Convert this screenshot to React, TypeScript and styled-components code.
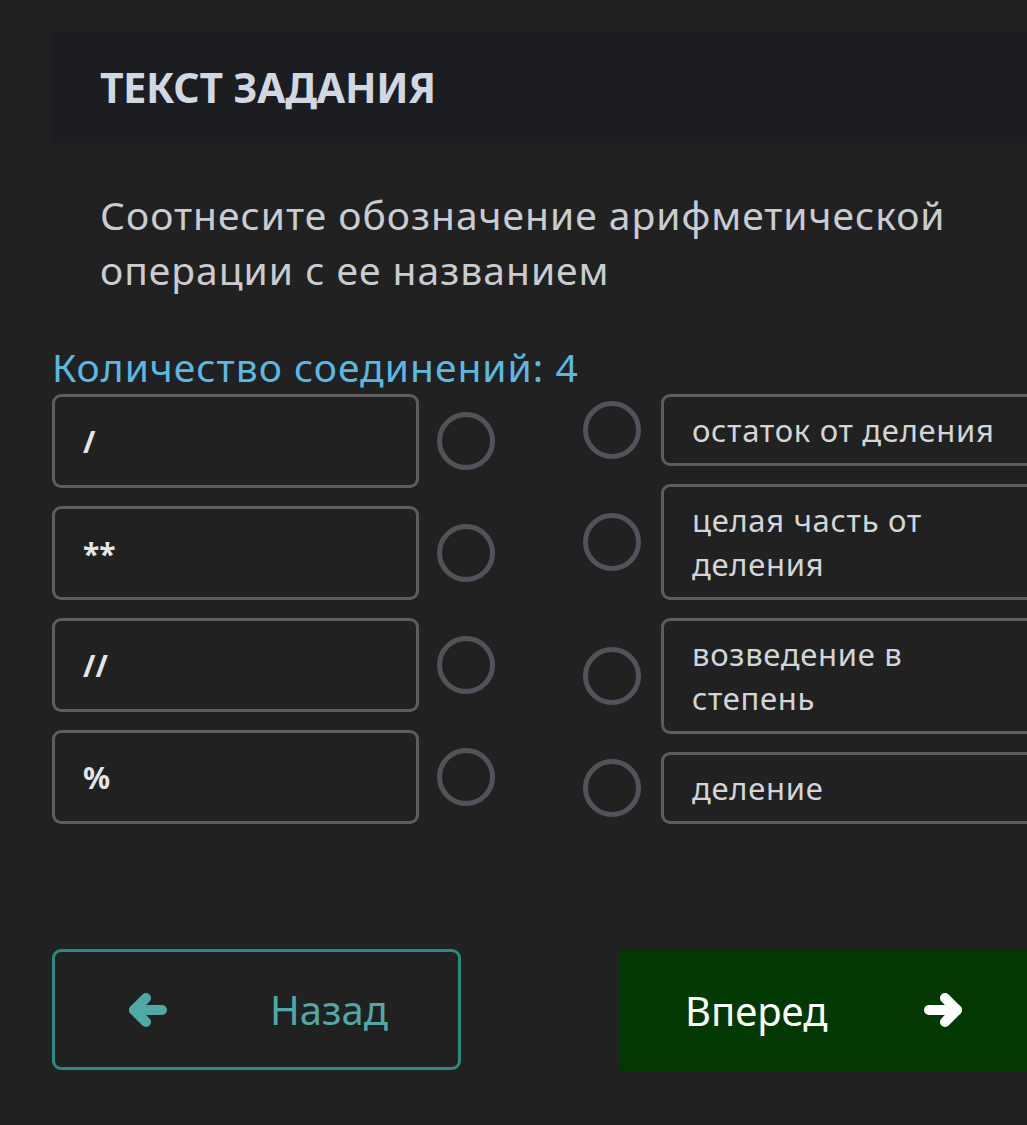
import React from 'react'
import styled, { createGlobalStyle } from 'styled-components'

const GlobalStyle = createGlobalStyle`
  html, body {
    margin: 0;
    padding: 0;
    background: #212121;
    overflow: hidden;
  }
  body {
    font-family: 'Noto Sans', 'Open Sans', sans-serif;
  }
`

const Page = styled.div`
  width: 1060px;
  padding: 32px 0 0 52px;
  box-sizing: border-box;
`

const TaskHeader = styled.div`
  background: #1c1d20;
  height: 111px;
  display: flex;
  align-items: center;
  padding-left: 48px;
  box-sizing: border-box;
`

const TaskTitle = styled.h1`
  margin: 0 0 2px;
  font-size: 41px;
  font-weight: 700;
  letter-spacing: -0.3px;
  color: #d2d8e2;
`

const Question = styled.p`
  margin: 44px 0 0 48px;
  font-size: 39px;
  line-height: 55px;
  letter-spacing: 1px;
  color: #c9ccd1;
  width: 900px;
`

const Counter = styled.div`
  margin-top: 48px;
  font-size: 39px;
  line-height: 44px;
  letter-spacing: 1px;
  color: #5bb8e2;
`

const Matching = styled.div`
  display: flex;
  margin-top: 5px;
`

const Column = styled.div<{ $width: number }>`
  display: flex;
  flex-direction: column;
  gap: 18px;
  width: ${p => p.$width}px;
`

const Row = styled.div<{ $height: number; $gap: number }>`
  display: flex;
  align-items: center;
  gap: ${p => p.$gap}px;
  height: ${p => p.$height}px;
`

const Box = styled.div<{ $width: number }>`
  width: ${p => p.$width}px;
  height: 100%;
  border: 3px solid #5c5d5f;
  border-radius: 9px;
  box-sizing: border-box;
  display: flex;
  align-items: center;
  padding-left: 28px;
  flex-shrink: 0;
`

const Symbol = styled.span`
  font-size: 30px;
  font-weight: 700;
  color: #e4e6ea;
`

const Label = styled.span`
  font-size: 31px;
  line-height: 44px;
  letter-spacing: 0.7px;
  color: #d3d5d8;
  padding-right: 20px;
`

const Dot = styled.div`
  width: 58px;
  height: 58px;
  border: 5px solid #50535a;
  border-radius: 50%;
  box-sizing: border-box;
  flex-shrink: 0;
`

const Nav = styled.div`
  display: flex;
  gap: 158px;
  margin-top: 125px;
`

const BackButton = styled.button`
  width: 409px;
  height: 121px;
  background: transparent;
  border: 3px solid #2a8a82;
  border-radius: 9px;
  display: flex;
  align-items: center;
  padding: 0 0 0 72px;
  color: #4fa9a7;
  font-family: inherit;
  font-size: 40px;
  gap: 103px;
`

const NextButton = styled.button`
  width: 420px;
  height: 122px;
  background: #023802;
  border: none;
  border-radius: 4px;
  display: flex;
  align-items: center;
  padding: 0 0 0 66px;
  color: #ffffff;
  font-family: inherit;
  font-size: 40px;
  gap: 96px;
`

const Arrow = ({ dir }: { dir: 'left' | 'right' }) => (
  <svg width="40" height="34" viewBox="0 0 40 34" style={{ flexShrink: 0 }}>
    <g
      fill="none"
      stroke="currentColor"
      strokeWidth="10"
      strokeLinecap="round"
      strokeLinejoin="round"
      transform={dir === 'right' ? 'matrix(-1 0 0 1 40 0)' : undefined}
    >
      <path d="M35 17H7" />
      <path d="M19 5L7 17L19 29" />
    </g>
  </svg>
)

const left = ['/', '**', '//', '%']
const right = [
  { text: 'остаток от деления', h: 72 },
  { text: 'целая часть от деления', h: 116 },
  { text: 'возведение в степень', h: 116 },
  { text: 'деление', h: 72 },
]

const App = () => {
  return (
    <Page>
      <GlobalStyle />
      <TaskHeader>
        <TaskTitle>ТЕКСТ ЗАДАНИЯ</TaskTitle>
      </TaskHeader>
      <Question>Соотнесите обозначение арифметической операции с ее названием</Question>
      <Counter>Количество соединений: 4</Counter>
      <Matching>
        <Column $width={531}>
          {left.map(s => (
            <Row key={s} $height={94} $gap={18}>
              <Box $width={367}><Symbol>{s}</Symbol></Box>
              <Dot />
            </Row>
          ))}
        </Column>
        <Column $width={460}>
          {right.map(r => (
            <Row key={r.text} $height={r.h} $gap={20}>
              <Dot />
              <Box $width={380}><Label>{r.text}</Label></Box>
            </Row>
          ))}
        </Column>
      </Matching>
      <Nav>
        <BackButton>
          <Arrow dir="left" />
          Назад
        </BackButton>
        <NextButton>
          Вперед
          <Arrow dir="right" />
        </NextButton>
      </Nav>
    </Page>
  )
}

export default App
